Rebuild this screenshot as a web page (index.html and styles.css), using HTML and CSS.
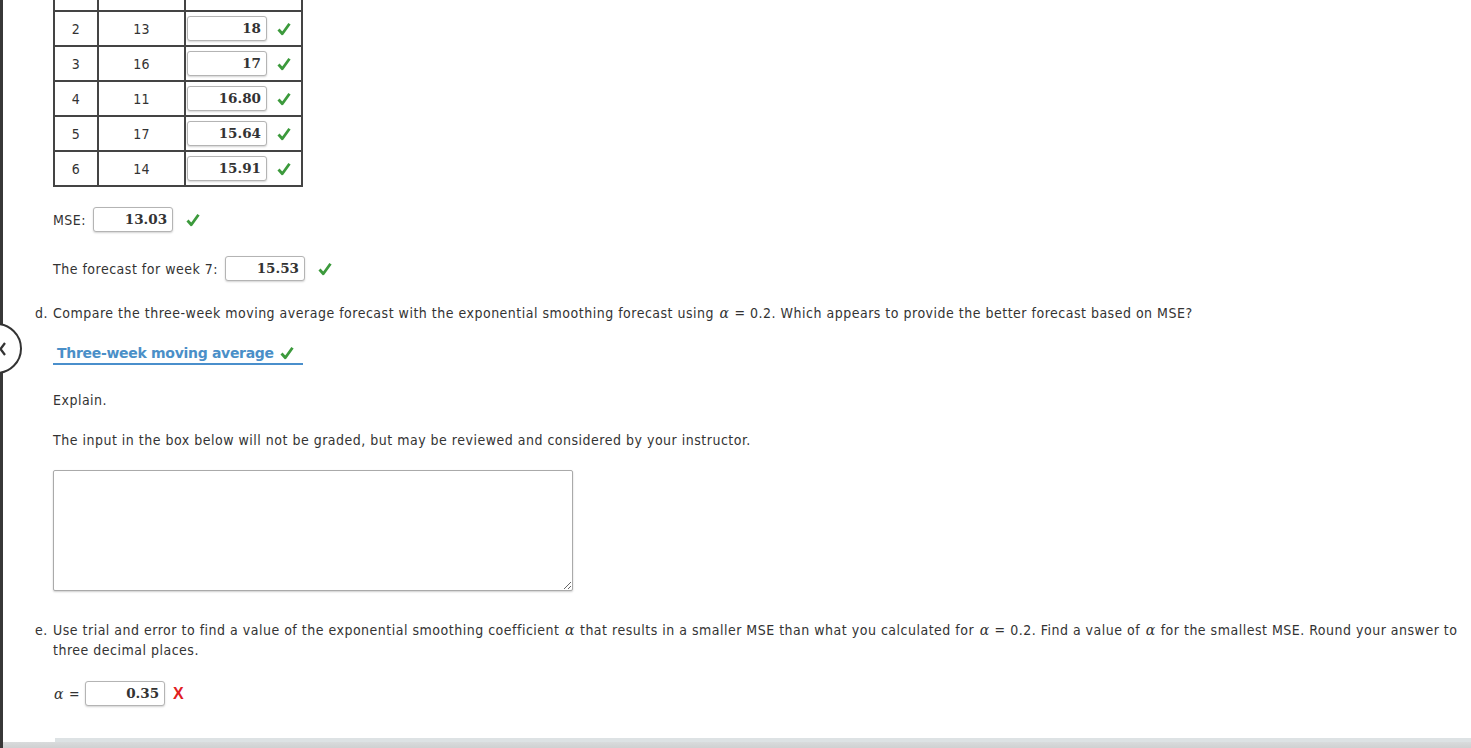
FILE: index.html
```html
<!DOCTYPE html>
<html>
<head>
<meta charset="utf-8">
<link rel="stylesheet" href="styles.css">
</head>
<body>
<div class="page">
  <table class="grid">
    <tr><td class="c1">1</td><td class="c2">10</td><td class="c3"></td></tr>
    <tr><td class="c1">2</td><td class="c2">13</td><td class="c3"><div class="cell"><span class="box">18</span><svg class="ok" viewBox="0 0 14 14"><path d="M1.5 7.5 L5.3 11.8 L12.5 1.8" fill="none" stroke="#3c9a3c" stroke-width="2.8" stroke-linejoin="round"/></svg></div></td></tr>
    <tr><td class="c1">3</td><td class="c2">16</td><td class="c3"><div class="cell"><span class="box">17</span><svg class="ok" viewBox="0 0 14 14"><path d="M1.5 7.5 L5.3 11.8 L12.5 1.8" fill="none" stroke="#3c9a3c" stroke-width="2.8" stroke-linejoin="round"/></svg></div></td></tr>
    <tr><td class="c1">4</td><td class="c2">11</td><td class="c3"><div class="cell"><span class="box">16.80</span><svg class="ok" viewBox="0 0 14 14"><path d="M1.5 7.5 L5.3 11.8 L12.5 1.8" fill="none" stroke="#3c9a3c" stroke-width="2.8" stroke-linejoin="round"/></svg></div></td></tr>
    <tr><td class="c1">5</td><td class="c2">17</td><td class="c3"><div class="cell"><span class="box">15.64</span><svg class="ok" viewBox="0 0 14 14"><path d="M1.5 7.5 L5.3 11.8 L12.5 1.8" fill="none" stroke="#3c9a3c" stroke-width="2.8" stroke-linejoin="round"/></svg></div></td></tr>
    <tr><td class="c1">6</td><td class="c2">14</td><td class="c3"><div class="cell"><span class="box">15.91</span><svg class="ok" viewBox="0 0 14 14"><path d="M1.5 7.5 L5.3 11.8 L12.5 1.8" fill="none" stroke="#3c9a3c" stroke-width="2.8" stroke-linejoin="round"/></svg></div></td></tr>
  </table>

  <div class="line mse">
    <span class="lbl">MSE:</span>
    <span class="box">13.03</span>
    <svg class="ok" viewBox="0 0 14 14"><path d="M1.5 7.5 L5.3 11.8 L12.5 1.8" fill="none" stroke="#3c9a3c" stroke-width="2.8" stroke-linejoin="round"/></svg>
  </div>

  <div class="line fc">
    <span class="lbl">The forecast for week 7:</span>
    <span class="box">15.53</span>
    <svg class="ok" viewBox="0 0 14 14"><path d="M1.5 7.5 L5.3 11.8 L12.5 1.8" fill="none" stroke="#3c9a3c" stroke-width="2.8" stroke-linejoin="round"/></svg>
  </div>

  <div class="q qd">
    <span class="qlabel">d.</span>
    <span class="qtext">Compare the three-week moving average forecast with the exponential smoothing forecast using <i class="alpha">α</i> = 0.2. Which appears to provide the better forecast based on MSE?</span>
  </div>

  <div class="select">
    <span class="sel-text">Three-week moving average</span>
    <svg class="ok" viewBox="0 0 14 14"><path d="M1.5 7.5 L5.3 11.8 L12.5 1.8" fill="none" stroke="#3c9a3c" stroke-width="2.8" stroke-linejoin="round"/></svg>
  </div>

  <p class="para explain">Explain.</p>
  <p class="para note">The input in the box below will not be graded, but may be reviewed and considered by your instructor.</p>

  <textarea class="area"></textarea>

  <div class="q qe">
    <span class="qlabel">e.</span>
    <span class="qtext">Use trial and error to find a value of the exponential smoothing coefficient <i class="alpha">α</i> that results in a smaller MSE than what you calculated for <i class="alpha">α</i> = 0.2. Find a value of <i class="alpha">α</i> for the smallest MSE. Round your answer to three decimal places.</span>
  </div>

  <div class="line al">
    <span class="lbl"><i class="alpha">α</i> =</span>
    <span class="box small">0.35</span>
    <span class="bad">X</span>
  </div>

  <div class="bottombar"></div>
</div>
<div class="nav-circle"><svg width="7" height="14" viewBox="0 0 7 14"><path d="M6 1 L1.5 7 L6 13" fill="none" stroke="#333" stroke-width="2.2"/></svg></div>
</body>
</html>
```

FILE: styles.css
```css
html, body {
  margin: 0;
  padding: 0;
  background: #fff;
  overflow: hidden;
}

body {
  position: relative;
  font-family: "DejaVu Sans Condensed", "DejaVu Sans", sans-serif;
  font-size: 14px;
  letter-spacing: 0.5px;
  color: #333;
}

.page {
  position: relative;
  height: 748px;
  border-left: 3px solid #383838;
  box-sizing: border-box;
  padding-left: 50px;
  overflow: hidden;
}

.nav-circle {
  position: absolute;
  left: -29px;
  top: 323px;
  width: 51px;
  height: 51px;
  border: 2.5px solid #333;
  border-radius: 50%;
  background: #fff;
  display: flex;
  align-items: center;
  justify-content: flex-end;
  padding-right: 14px;
  box-sizing: border-box;
}

.nav-circle svg {
  width: 7px;
  height: 14px;
}

.grid {
  border-collapse: collapse;
  margin-top: -25px;
  margin-left: 0;
}

.grid td {
  border: 2px solid #444;
  height: 33px;
  padding: 0;
  text-align: center;
  font-size: 14px;
  letter-spacing: 0.3px;
}

.c1 { width: 42px; }
.c2 { width: 85px; }
.c3 { width: 115px; }

.cell {
  display: flex;
  align-items: center;
  padding-left: 1px;
  gap: 10px;
}

.box {
  display: inline-block;
  box-sizing: border-box;
  width: 80px;
  height: 25px;
  line-height: 23px;
  border: 1px solid #b4b4b4;
  border-radius: 3px;
  box-shadow: 0 1px 2px rgba(0,0,0,0.18);
  text-align: right;
  padding-right: 5px;
  font-family: "DejaVu Serif", serif;
  font-weight: bold;
  font-size: 13.5px;
  letter-spacing: 0;
  color: #333;
  background: #fff;
}

.ok {
  width: 14px;
  height: 14px;
  flex: none;
}

.line {
  display: flex;
  align-items: center;
  gap: 7px;
}

.line .ok {
  margin-left: 6px;
}

.mse {
  margin-top: 20px;
}

.fc {
  margin-top: 24px;
}

.q {
  display: flex;
  margin-left: -18px;
  line-height: 20px;
}

.qlabel {
  width: 18px;
  flex: none;
}

.qtext {
  flex: 1;
  padding-right: 4px;
}

.qd {
  margin-top: 22px;
}

.alpha {
  font-family: "DejaVu Serif", serif;
  font-style: italic;
  font-size: 14px;
  line-height: 1;
  letter-spacing: 0;
  margin: 0 1px;
}

.select {
  display: flex;
  align-items: center;
  width: 250px;
  box-sizing: border-box;
  padding-left: 4px;
  gap: 6px;
  border-bottom: 2px solid #4a8fcc;
  margin-top: 20px;
  height: 22px;
}

.sel-text {
  font-family: "DejaVu Sans", sans-serif;
  font-weight: bold;
  font-size: 14px;
  color: #4a8fc8;
  letter-spacing: -0.3px;
}

.para {
  margin: 0;
  line-height: 20px;
}

.explain {
  margin-top: 25px;
}

.note {
  margin-top: 20px;
}

.area {
  display: block;
  width: 520px;
  height: 121px;
  box-sizing: border-box;
  border: 1px solid #aaa;
  border-radius: 2px;
  box-shadow: 0 1px 2px rgba(0,0,0,0.2);
  margin-top: 20px;
  resize: both;
}

.qe {
  margin-top: 29px;
}

.al {
  margin-top: 21px;
  gap: 5px;
}

.small {
  width: 80px;
}

.bad {
  font-family: "Liberation Sans", sans-serif;
  font-weight: bold;
  color: #e0201e;
  font-size: 16px;
  margin-left: 3px;
}

.bottombar {
  position: absolute;
  left: 0;
  right: 0;
  bottom: 0;
  height: 6px;
  background: linear-gradient(#d9dbdc, #cfd1d2);
}

.bottombar::before {
  content: "";
  position: absolute;
  left: 52px;
  right: 0;
  top: -4px;
  height: 4px;
  background: #dde2e4;
}
```
